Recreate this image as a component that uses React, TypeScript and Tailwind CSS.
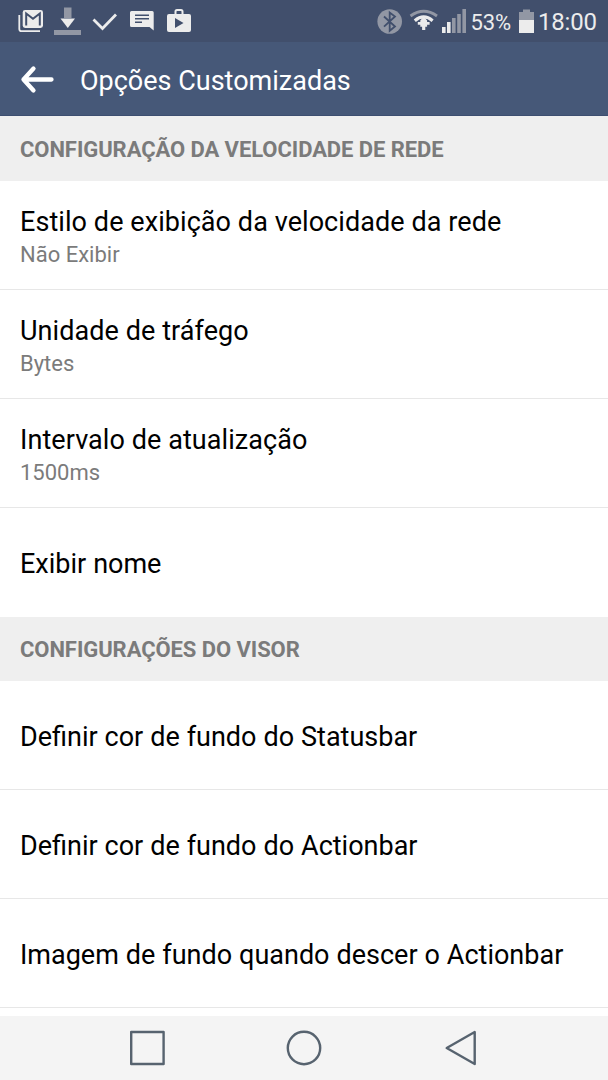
import React from "react";

function StatusLeft() {
  return (
    <svg width="210" height="42" viewBox="0 0 210 42" fill="#ececec" aria-hidden="true">
      <path d="M19.300 15v14a2.200 2.200 0 0 0 2.200 2.200H40" fill="none" stroke="#ececec" strokeWidth="1.800" />
      <rect x="22.700" y="10" width="20.300" height="18" rx="2.400" />
      <path d="M26.200 25.500V13.500L33 18.800l6.800-5.300v12" fill="none" stroke="#414f6c" strokeWidth="2" />
      <path d="M64 7.500h7.500V18H64zM54 30h27v5H54z" fill="#9297a4" />
      <path d="M60.500 18.500h14.500l-7.200 9.500z" />
      <path d="M93.500 19.500l9 9 13.500-14" fill="none" stroke="#ececec" strokeWidth="2.800" />
      <path d="M131.500 11h20.700a1.500 1.500 0 0 1 1.500 1.500V30.500L149.500 27H131.500a1.500 1.500 0 0 1-1.500-1.500V12.500A1.500 1.500 0 0 1 131.500 11z" />
      <path d="M135 15.200h14M135 18.700h14M135 22.200h7" stroke="#414f6c" strokeWidth="1.500" />
      <rect x="167" y="14" width="24" height="18" rx="2" />
      <path d="M175.500 14.500v-3a1.500 1.500 0 0 1 1.500-1.500h4a1.500 1.500 0 0 1 1.500 1.500v3" fill="none" stroke="#ececec" strokeWidth="2" />
      <path d="M175 18v10l8.500-5z" fill="#414f6c" />
    </svg>
  );
}

function StatusSignals() {
  return (
    <svg width="96" height="42" viewBox="374 0 96 42" aria-hidden="true">
      <circle cx="389.700" cy="21.500" r="12.300" fill="#9297a4" />
      <path d="M384 16.500l11 10-5.300 4.300V12.500l5.300 4-11 10.200" fill="none" stroke="#414f6c" strokeWidth="1.800" />
      <path d="M410.500 16q13.200-9.500 26.500 0" fill="none" stroke="#9297a4" strokeWidth="2.800" />
      <path d="M414.800 20.700q8.800-7.500 17.800 0" fill="none" stroke="#ececec" strokeWidth="3.200" />
      <path d="M420.300 20.500l3.400-4 3.400 4v1.500h2.500v2.800h-2.500v2h-1.800v3.200h-3.200v-3.200h-1.800v-2h-2.500V22h2.500z" fill="#ececec" />
      <path d="M442 27h3.600v6H442zM447 22h3.600v11H447z" fill="#ececec" />
      <path d="M452 18h3.600v15H452zM457.200 14h3.600v19H457.200zM462.400 9H466v24h-3.600z" fill="#9297a4" />
    </svg>
  );
}

function Battery() {
  return (
    <svg width="16" height="42" viewBox="519 0 16 42" aria-hidden="true">
      <path d="M523 9.500h7V12h4v8.500H519V12h4z" fill="#9297a4" />
      <path d="M519 20h15v13H519z" fill="#ececec" />
    </svg>
  );
}

function StatusBar() {
  return (
    <div className="flex h-[42px] shrink-0 bg-[#414f6c] text-[#ececec]">
      <StatusLeft />
      <div className="ml-auto flex pr-[13px]">
        <StatusSignals />
        <span className="w-[49px] pl-[0.5px] text-[22px] leading-[45px] tracking-[-0.15px] whitespace-nowrap">53%</span>
        <Battery />
        <span className="w-[60px] pl-[3px] text-[24px] leading-[45px] tracking-[-0.2px] whitespace-nowrap">18:00</span>
      </div>
    </div>
  );
}

function SectionHeader({ children, first = false }: { children: React.ReactNode; first?: boolean }) {
  return (
    <h2
      className={`shrink-0 bg-[#efefef] px-[20px] text-[22px] font-bold tracking-[-0.07px] whitespace-nowrap text-[#7b7b7b] ${first ? "h-[65px] leading-[67px]" : "h-[64px] leading-[65px]"}`}
    >
      {children}
    </h2>
  );
}

function Row({ title, value, last = false }: { title: string; value?: string; last?: boolean }) {
  return (
    <li
      className={`flex h-[109px] shrink-0 flex-col justify-center px-[20px] ${value ? "pt-[4px]" : "pt-[3px]"} ${last ? "" : "border-b border-[#e7e7e7]"}`}
    >
      <span className={`text-[27px] leading-[34px] whitespace-nowrap text-black ${value ? "tracking-[0.07px]" : "[word-spacing:0.25px]"}`}>
        {title}
      </span>
      {value && <span className="text-[22px] leading-[31px] text-[#7b7b7b]">{value}</span>}
    </li>
  );
}

export default function App() {
  return (
    <div className="flex h-[1080px] w-[608px] flex-col overflow-hidden bg-white font-['Roboto',sans-serif]">
      <StatusBar />
      <header className="flex h-[74px] shrink-0 items-center border-b border-[#3d4e70] bg-[#465878] text-white">
        <svg className="ml-[19px]" width="36" height="30" viewBox="0 0 36 30" aria-hidden="true">
          <path d="M14.500 4.500L4.500 15.500L14.500 26.500M4.500 15.500H32.500" fill="none" stroke="white" strokeWidth="4.300" strokeLinecap="round" strokeLinejoin="round" />
        </svg>
        <h1 className="pt-[4px] pl-[25px] text-[27px] leading-[40px] whitespace-nowrap">Opções Customizadas</h1>
      </header>
      <main className="flex h-[900px] shrink-0 flex-col overflow-hidden">
        <SectionHeader first>CONFIGURAÇÃO DA VELOCIDADE DE REDE</SectionHeader>
        <ul>
          <Row title="Estilo de exibição da velocidade da rede" value="Não Exibir" />
          <Row title="Unidade de tráfego" value="Bytes" />
          <Row title="Intervalo de atualização" value="1500ms" />
          <Row title="Exibir nome" last />
        </ul>
        <SectionHeader>CONFIGURAÇÕES DO VISOR</SectionHeader>
        <ul>
          <Row title="Definir cor de fundo do Statusbar" />
          <Row title="Definir cor de fundo do Actionbar" />
          <Row title="Imagem de fundo quando descer o Actionbar" />
        </ul>
      </main>
      <nav className="flex h-[64px] shrink-0 items-center justify-between bg-[#f4f4f4] pr-[130px] pl-[129px]">
        <svg width="37" height="38" viewBox="129 1029 37 38" fill="none" stroke="#57636f" strokeWidth="2.400" strokeLinejoin="round" aria-hidden="true">
          <rect x="131.200" y="1032" width="32.400" height="32" />
        </svg>
        <svg width="38" height="38" viewBox="286 1029 38 38" fill="none" stroke="#57636f" strokeWidth="2.400" aria-hidden="true">
          <circle cx="304" cy="1048" r="16.200" />
        </svg>
        <svg width="34" height="38" viewBox="444 1029 34 38" fill="none" stroke="#57636f" strokeWidth="2.400" strokeLinejoin="round" aria-hidden="true">
          <path d="M474.700 1032v32l-28-16z" />
        </svg>
      </nav>
    </div>
  );
}
